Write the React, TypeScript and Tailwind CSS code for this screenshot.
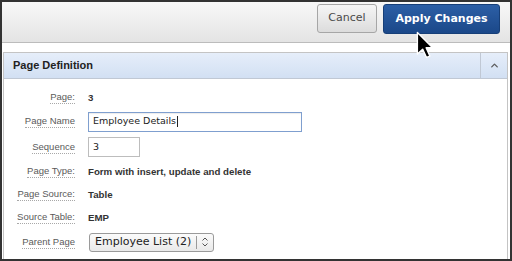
import { ChevronUp } from "lucide-react";

const labelCls =
  "border-b border-dotted border-[#a8a8a8] pb-[1px] text-[9.5px] leading-[11px] text-[#5a5a5a]";
const valueCls = "text-[9.7px] font-bold leading-[11px] text-[#333]";

function Row({
  h,
  label,
  children,
}: {
  h: string;
  label: string;
  children: React.ReactNode;
}) {
  return (
    <div className={`flex items-center ${h}`}>
      <div className="flex w-[71px] justify-end">
        <span className={labelCls}>{label}</span>
      </div>
      <div className="ml-[13px] flex items-center">{children}</div>
    </div>
  );
}

function Cursor() {
  return (
    <svg
      className="absolute left-[414px] top-[29px]"
      width="18"
      height="28"
      viewBox="0 0 13 20"
    >
      <path
        d="M1 1 L1 16.5 L4.8 13 L7.6 19 L10 18 L7.3 12 L12 12 Z"
        fill="#000"
        stroke="#fff"
        strokeWidth="1"
        strokeLinejoin="round"
      />
    </svg>
  );
}

export default function App() {
  return (
    <div
      className="relative flex h-[261px] w-[512px] flex-col overflow-hidden border-2 border-[#333] bg-white"
      style={{ fontFamily: '"Liberation Sans", Arial, sans-serif' }}
    >
      {/* toolbar */}
      <div className="flex h-[41px] items-start justify-end gap-[6px] border-b border-[#bcbcbc] bg-gradient-to-b from-[#f8f8f8] to-[#e4e4e4] pr-[10px] pt-[2px]">
        <button
          className="flex h-[29px] w-[60px] items-center justify-center rounded-[3px] border border-[#a6a6a6] bg-gradient-to-b from-[#f6f6f6] to-[#dcdcdc] text-[11px] text-[#4a4a4a]"
          style={{ fontFamily: '"DejaVu Sans", sans-serif' }}
        >
          Cancel
        </button>
        <button
          className="flex h-[30px] w-[117px] items-center justify-center rounded-[3px] border border-[#173f78] bg-gradient-to-b from-[#2c5fa6] to-[#1b4889] text-[11px] font-bold text-white"
          style={{ fontFamily: '"DejaVu Sans", sans-serif' }}
        >
          Apply Changes
        </button>
      </div>

      {/* panel */}
      <div className="ml-[1px] mr-[2px] mt-[9px] flex flex-1 flex-col border border-b-0 border-[#c4c4c4]">
        <div className="flex h-[26px] items-center border-b border-[#c0c8d4] bg-gradient-to-b from-[#e6eefa] to-[#d2e0f3]">
          <span className="flex-1 pl-[9px] text-[11px] font-bold text-[#222]">
            Page Definition
          </span>
          <div className="flex h-full w-[27px] items-center justify-center border-l border-[#c0c8d4]">
            <ChevronUp className="h-[11px] w-[11px] text-[#5c5c5c]" strokeWidth={3} />
          </div>
        </div>

        <div className="flex flex-col pt-[6px]">
          <Row h="h-[24px]" label="Page:">
            <span className={valueCls}>3</span>
          </Row>
          <Row h="h-[25px]" label="Page Name">
            <div
              className="flex h-[20px] w-[214px] items-center border border-[#7f9fcf] bg-white pl-[4px] text-[9.5px] text-[#222] shadow-[inset_0_1px_1px_rgba(0,0,0,0.08)]"
              style={{ fontFamily: '"DejaVu Sans", sans-serif' }}
            >
              Employee Details
              <span className="ml-[1px] h-[11px] w-[1px] bg-[#222]" />
            </div>
          </Row>
          <Row h="h-[26px]" label="Sequence">
            <div
              className="flex h-[20px] w-[52px] items-center border border-[#bdbdbd] bg-white pl-[4px] text-[9.5px] text-[#222]"
              style={{ fontFamily: '"DejaVu Sans", sans-serif' }}
            >
              3
            </div>
          </Row>
          <Row h="h-[23px]" label="Page Type:">
            <span className={valueCls}>Form with insert, update and delete</span>
          </Row>
          <Row h="h-[23px]" label="Page Source:">
            <span className={valueCls}>Table</span>
          </Row>
          <Row h="h-[23px]" label="Source Table:">
            <span className={valueCls}>EMP</span>
          </Row>
          <Row h="h-[26px]" label="Parent Page">
            <div
              className="ml-[1px] flex h-[19px] w-[125px] items-center rounded-[3px] border border-[#9a9a9a] bg-gradient-to-b from-[#fbfbfb] to-[#e9e9e9] pl-[5px] text-[11px] text-[#222]"
              style={{ fontFamily: '"DejaVu Sans", sans-serif' }}
            >
              <span className="flex-1">Employee List (2)</span>
              <span className="h-[13px] w-[1px] bg-[#9a9a9a]" />
              <svg width="16" height="12" viewBox="0 0 16 12">
                <path
                  d="M5.5 4.5 L8 2 L10.5 4.5 M5.5 7.5 L8 10 L10.5 7.5"
                  fill="none"
                  stroke="#555"
                  strokeWidth="1"
                />
              </svg>
            </div>
          </Row>
        </div>
      </div>

      <Cursor />
    </div>
  );
}
